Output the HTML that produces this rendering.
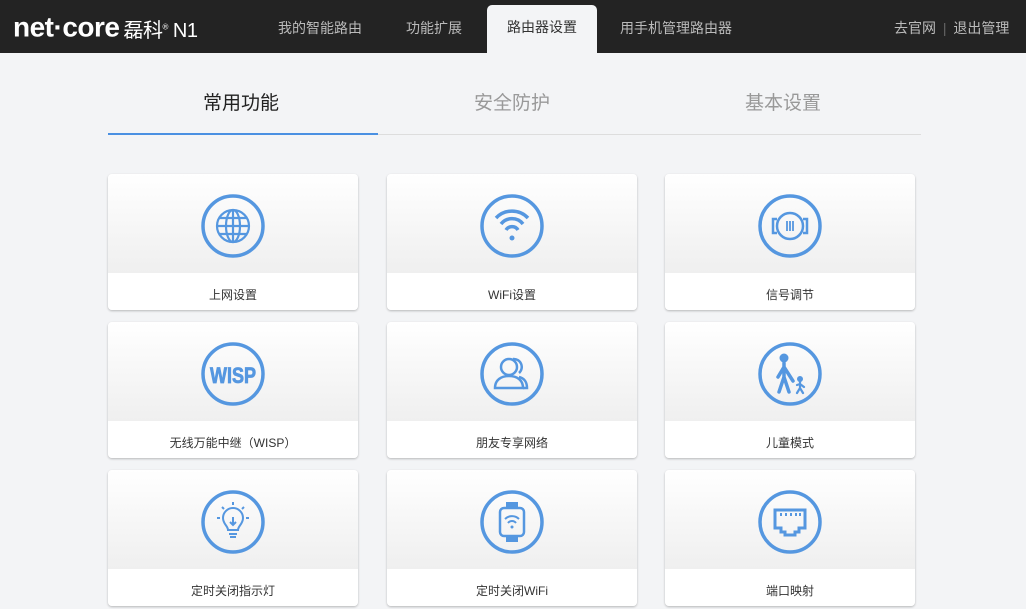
<!DOCTYPE html>
<html><head><meta charset="utf-8"><style>
*{margin:0;padding:0;box-sizing:border-box}
body{width:1026px;height:609px;overflow:hidden;background:#f3f4f6;font-family:"Liberation Sans","Noto Sans CJK SC",sans-serif;position:relative}
.hdr{position:absolute;left:0;top:0;width:1026px;height:53px;background:#232323}
.logo{position:absolute;left:13px;top:11px;color:#fff;font-weight:bold;font-size:28px;letter-spacing:-0.5px;line-height:32px}
.logo small{font-size:20px;font-weight:normal;margin-left:4px}
.nav{position:absolute;top:18px;color:#bbb;font-size:14px}
.act{position:absolute;left:487px;top:5px;width:110px;height:48px;background:#f3f4f6;border-radius:5px 5px 0 0;color:#333;font-size:14px;text-align:center;line-height:44px}
.tabs{position:absolute;top:88px;font-size:19px;color:#999}
.line{position:absolute;left:108px;top:134px;width:813px;height:1px;background:#ddd}
.blue{position:absolute;left:108px;top:133px;width:270px;height:2px;background:#4a90e2}
.card{position:absolute;width:250px;height:136px;border-radius:4px;background:linear-gradient(#fff,#efefef 99px,#fff 99px);box-shadow:0 1px 2px rgba(0,0,0,.25)}
.card svg{position:absolute;left:92px;top:19px}
.card span{position:absolute;left:0;right:0;top:112px;text-align:center;font-size:12px;color:#333}
</style></head><body>
<div class="hdr">
<div class="logo">net·core<small>磊科<sup style="font-size:8px">®</sup> N1</small></div>
<div class="nav" style="left:278px">我的智能路由</div>
<div class="nav" style="left:406px">功能扩展</div>
<div class="act">路由器设置</div>
<div class="nav" style="left:620px">用手机管理路由器</div>
<div class="nav" style="left:894px">去官网 <span style="color:#666;margin:0 3px">|</span> 退出管理</div>
</div>
<div class="tabs" style="left:203px;color:#222">常用功能</div>
<div class="tabs" style="left:474px">安全防护</div>
<div class="tabs" style="left:745px">基本设置</div>
<div class="line"></div><div class="blue"></div>

<div class="card" style="left:108px;top:174px"><svg width="66" height="66" viewBox="0 0 66 66" fill="none" stroke="#5597e0" stroke-width="3.5"><circle cx="33" cy="33" r="30"/><g stroke-width="2.2"><circle cx="33" cy="33" r="16"/><path d="M17 33h32M19 25h28M19 41h28M33 17v32"/><ellipse cx="33" cy="33" rx="7" ry="16"/></g></svg><span>上网设置</span></div>
<div class="card" style="left:387px;top:174px"><svg width="66" height="66" viewBox="0 0 66 66" fill="none" stroke="#5597e0" stroke-width="3.5"><circle cx="33" cy="33" r="30"/><path d="M17 25a22 22 0 0 1 32 0M22 31a14 14 0 0 1 22 0M27 37a7 7 0 0 1 12 0"/><circle cx="33" cy="45" r="2.5" fill="#5597e0" stroke="none"/></svg><span>WiFi设置</span></div>
<div class="card" style="left:665px;top:174px"><svg width="66" height="66" viewBox="0 0 66 66" fill="none" stroke="#5597e0" stroke-width="3.5"><circle cx="33" cy="33" r="30"/><circle cx="33" cy="33" r="13" stroke-width="2.5"/><path d="M20 26h-4v14h4M46 26h4v14h-4" stroke-width="2.5"/><path d="M30 28v10M33 28v10M36 28v10" stroke-width="1.8"/></svg><span>信号调节</span></div>

<div class="card" style="left:108px;top:322px"><svg width="66" height="66" viewBox="0 0 66 66" fill="none" stroke="#5597e0" stroke-width="3.5"><circle cx="33" cy="33" r="30"/><text x="33" y="42" text-anchor="middle" fill="#5597e0" stroke="#5597e0" stroke-width="0.8" font-family="Liberation Sans Narrow, Liberation Sans" font-weight="bold" font-size="22" textLength="46" lengthAdjust="spacingAndGlyphs">WISP</text></svg><span>无线万能中继（WISP）</span></div>
<div class="card" style="left:387px;top:322px"><svg width="66" height="66" viewBox="0 0 66 66" fill="none" stroke="#5597e0" stroke-width="3.5"><circle cx="33" cy="33" r="30"/><g stroke-width="2.5"><circle cx="30" cy="26" r="8"/><path d="M16 47c0-8 6-12 14-12s14 4 14 12z"/><path d="M34 18a8 8 0 0 1 6 14M40 36c5 1 8 5 8 11h-4"/></g></svg><span>朋友专享网络</span></div>
<div class="card" style="left:665px;top:322px"><svg width="66" height="66" viewBox="0 0 66 66" fill="none" stroke="#5597e0" stroke-width="3.5"><circle cx="33" cy="33" r="30"/><circle cx="27" cy="17" r="4.5" fill="#5597e0" stroke="none"/><path d="M27 22v14M22 51l5-15 5 15M27 26l-6 10M27 26l9 14" stroke-width="3.5" stroke-linecap="round"/><circle cx="43" cy="38" r="3" fill="#5597e0" stroke="none"/><path d="M43 41v6M40 52l3-5 3 5M43 43l4 3M43 43l-3 1" stroke-width="2.2" stroke-linecap="round"/></svg><span>儿童模式</span></div>

<div class="card" style="left:108px;top:470px"><svg width="66" height="66" viewBox="0 0 66 66" fill="none" stroke="#5597e0" stroke-width="3.5"><circle cx="33" cy="33" r="30"/><g stroke-width="2"><path d="M28 41c0-4-5-6-5-12a10 10 0 0 1 20 0c0 6-5 8-5 12z"/><path d="M33 28v8M30 33l3 3 3-3M29 45h8M30 48h6M33 13v3M22 18l2 2M44 18l-2 2M17 29h3M46 29h3"/></g></svg><span>定时关闭指示灯</span></div>
<div class="card" style="left:387px;top:470px"><svg width="66" height="66" viewBox="0 0 66 66" fill="none" stroke="#5597e0" stroke-width="3.5"><circle cx="33" cy="33" r="30"/><rect x="27" y="13" width="12" height="6" fill="#5597e0" stroke="none"/><rect x="27" y="47" width="12" height="6" fill="#5597e0" stroke="none"/><rect x="21" y="19" width="24" height="28" rx="4" stroke-width="2.5"/><path d="M26 30a10 10 0 0 1 14 0M29 34a5 5 0 0 1 8 0" stroke-width="2"/><circle cx="33" cy="38" r="1.5" fill="#5597e0" stroke="none"/></svg><span>定时关闭WiFi</span></div>
<div class="card" style="left:665px;top:470px"><svg width="66" height="66" viewBox="0 0 66 66" fill="none" stroke="#5597e0" stroke-width="3.5"><circle cx="33" cy="33" r="30"/><path d="M18 21h30v18h-6v4h-4v3h-10v-3h-4v-4h-6z" stroke-width="3"/><path d="M24 24v3M29 24v3M34 24v3M39 24v3M43 24v3" stroke-width="2"/></svg><span>端口映射</span></div>
</body></html>
